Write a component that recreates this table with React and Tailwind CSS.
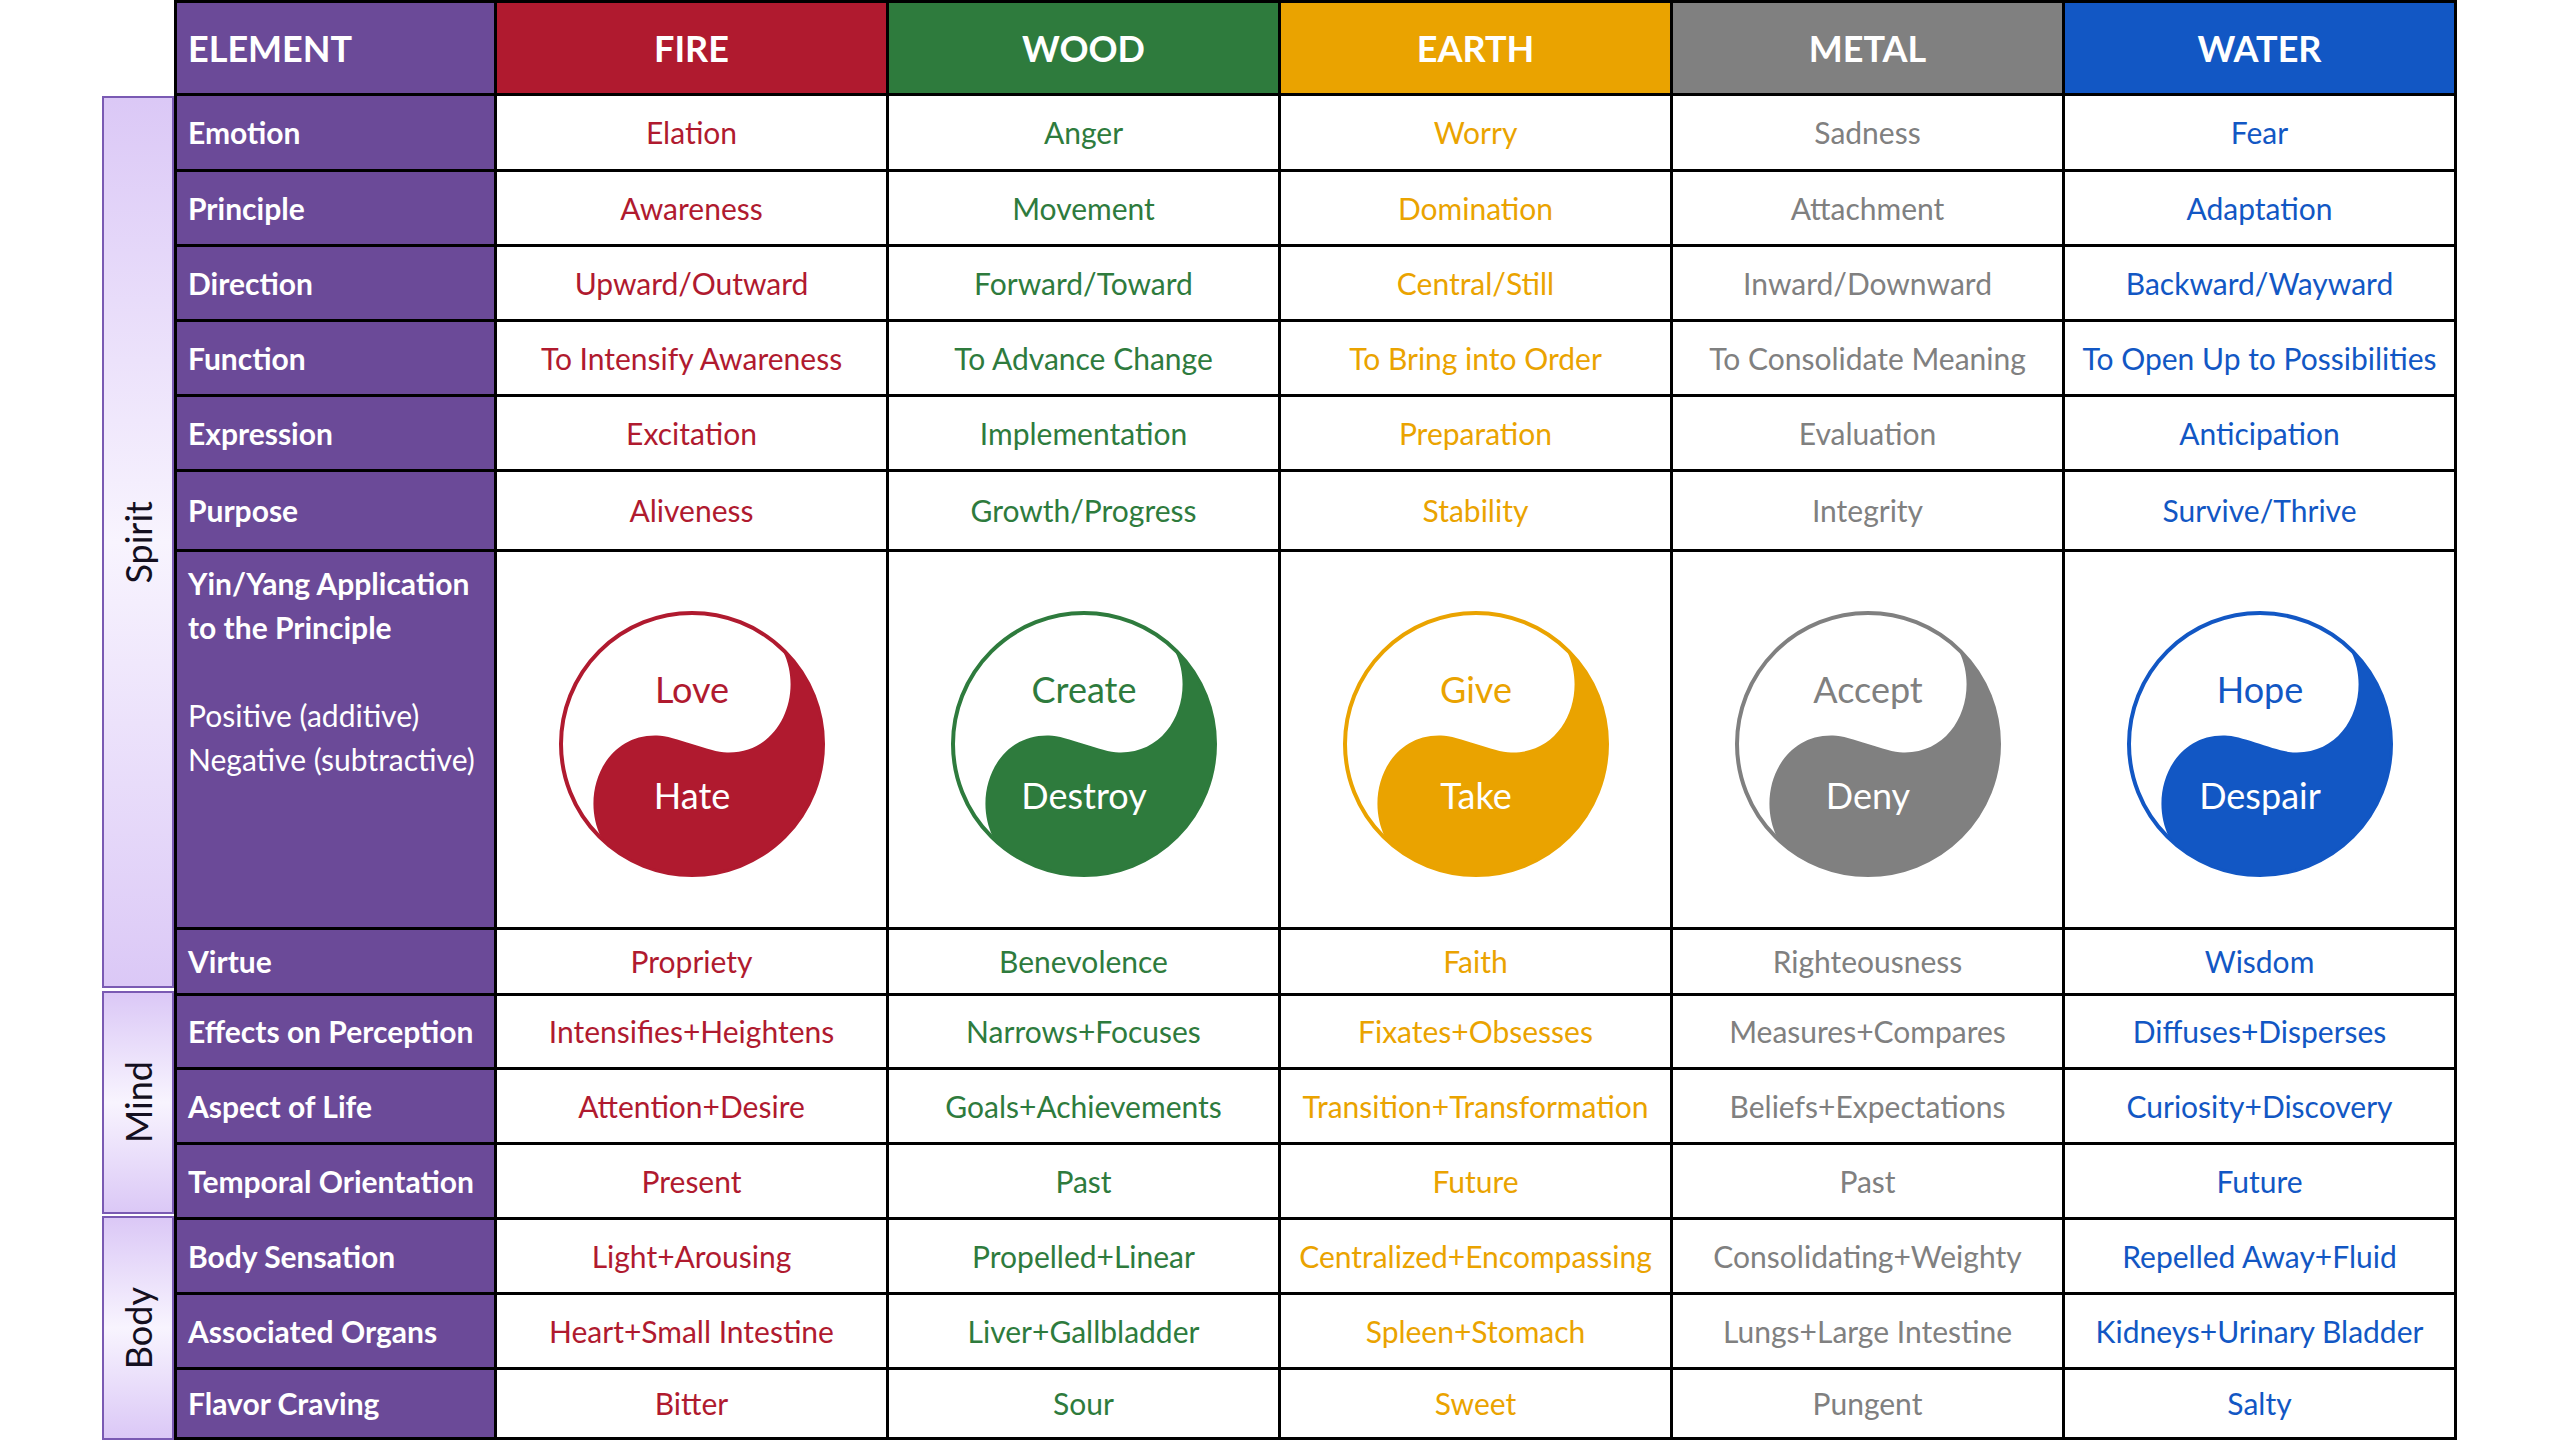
const ELEMENTS = [
  {
    name: 'FIRE',
    color: '#b01a2f',
    yin: ['Love', 'Hate'],
    values: ['Elation', 'Awareness', 'Upward/Outward', 'To Intensify Awareness', 'Excitation', 'Aliveness', null, 'Propriety', 'Intensifies+Heightens', 'Attention+Desire', 'Present', 'Light+Arousing', 'Heart+Small Intestine', 'Bitter'],
  },
  {
    name: 'WOOD',
    color: '#2e7b3d',
    yin: ['Create', 'Destroy'],
    values: ['Anger', 'Movement', 'Forward/Toward', 'To Advance Change', 'Implementation', 'Growth/Progress', null, 'Benevolence', 'Narrows+Focuses', 'Goals+Achievements', 'Past', 'Propelled+Linear', 'Liver+Gallbladder', 'Sour'],
  },
  {
    name: 'EARTH',
    color: '#eaa300',
    yin: ['Give', 'Take'],
    values: ['Worry', 'Domination', 'Central/Still', 'To Bring into Order', 'Preparation', 'Stability', null, 'Faith', 'Fixates+Obsesses', 'Transition+Transformation', 'Future', 'Centralized+Encompassing', 'Spleen+Stomach', 'Sweet'],
  },
  {
    name: 'METAL',
    color: '#808080',
    yin: ['Accept', 'Deny'],
    values: ['Sadness', 'Attachment', 'Inward/Downward', 'To Consolidate Meaning', 'Evaluation', 'Integrity', null, 'Righteousness', 'Measures+Compares', 'Beliefs+Expectations', 'Past', 'Consolidating+Weighty', 'Lungs+Large Intestine', 'Pungent'],
  },
  {
    name: 'WATER',
    color: '#1257c4',
    yin: ['Hope', 'Despair'],
    values: ['Fear', 'Adaptation', 'Backward/Wayward', 'To Open Up to Possibilities', 'Anticipation', 'Survive/Thrive', null, 'Wisdom', 'Diffuses+Disperses', 'Curiosity+Discovery', 'Future', 'Repelled Away+Fluid', 'Kidneys+Urinary Bladder', 'Salty'],
  },
];

const ROWS = [
  'Emotion', 'Principle', 'Direction', 'Function', 'Expression', 'Purpose', 'YIN',
  'Virtue', 'Effects on Perception', 'Aspect of Life', 'Temporal Orientation',
  'Body Sensation', 'Associated Organs', 'Flavor Craving',
];

// the dark half: outer arc on the right, then the S curve back through the middle
const YIN_PATH =
  'M 91 -93 A 130 130 0 1 1 -91 93 C -112 50 -88 -10 -35 -8.5 C -18 -8.5 18 8.5 35 8.5 C 88 10 112 -50 91 -93 Z';

function YinYang({ color, top, bottom }) {
  return (
    <svg width="268" height="268" viewBox="-134 -134 268 268">
      <circle r="131" fill="none" stroke={color} strokeWidth="4" />
      <path d={YIN_PATH} fill={color} />
      <text x="0" y="-41" textAnchor="middle" fill={color} fontSize="36">{top}</text>
      <text x="0" y="65" textAnchor="middle" fill="#ffffff" fontSize="36">{bottom}</text>
    </svg>
  );
}

function SideLabel({ label, className }) {
  return (
    <div className={`flex items-center justify-center border-2 border-[#7a5ab3] bg-linear-to-b from-[#dbc8f6] via-[#f8f4fe] to-[#dbc8f6] ${className}`}>
      <span className="rotate-180 text-[36px] leading-none font-normal text-[#140f20] [writing-mode:vertical-rl]">
        {label}
      </span>
    </div>
  );
}

export default function App() {
  return (
    <div className="flex h-[1440px] w-[2560px] bg-white pl-[102px] font-['Lato','Noto_Sans',sans-serif]">
      <div className="flex w-[72px] flex-col pt-[96px]">
        <SideLabel label="Spirit" className="h-[892px]" />
        <SideLabel label="Mind" className="mt-[3px] h-[223px]" />
        <SideLabel label="Body" className="mt-[2px] h-[224px]" />
      </div>

      <div className="grid h-[1440px] grid-cols-[317px_repeat(5,389px)] grid-rows-[90px_73px_repeat(4,72px)_77px_375px_63px_71px_repeat(4,72px)_67px] gap-[3px] self-start bg-black p-[3px]">
        <div className="flex items-center bg-[#6b4a98] pl-[11px] text-[36px] font-bold text-white">ELEMENT</div>
        {ELEMENTS.map(el => (
          <div
            key={el.name}
            className="flex items-center justify-center text-[36px] font-bold text-white"
            style={{ backgroundColor: el.color }}
          >
            {el.name}
          </div>
        ))}

        {ROWS.map((row, i) => {
          if (row === 'YIN') {
            return [
              <div key="yin-label" className="bg-[#6b4a98] pt-[9px] pl-[11px] text-[30px] leading-[44px] text-white">
                <div className="font-bold">Yin/Yang Application<br />to the Principle</div>
                <div className="mt-[44px]">Positive (additive)<br />Negative (subtractive)</div>
              </div>,
              ...ELEMENTS.map(el => (
                <div key={`yin-${el.name}`} className="flex items-center justify-center bg-white pt-2">
                  <YinYang color={el.color} top={el.yin[0]} bottom={el.yin[1]} />
                </div>
              )),
            ];
          }
          return [
            <div key={`label-${row}`} className="flex items-center bg-[#6b4a98] pl-[11px] text-[30px] font-bold text-white">
              {row}
            </div>,
            ...ELEMENTS.map(el => (
              <div
                key={`${row}-${el.name}`}
                className="flex items-center justify-center bg-white text-[30px] whitespace-nowrap"
                style={{ color: el.color }}
              >
                {el.values[i]}
              </div>
            )),
          ];
        })}
      </div>
    </div>
  );
}
